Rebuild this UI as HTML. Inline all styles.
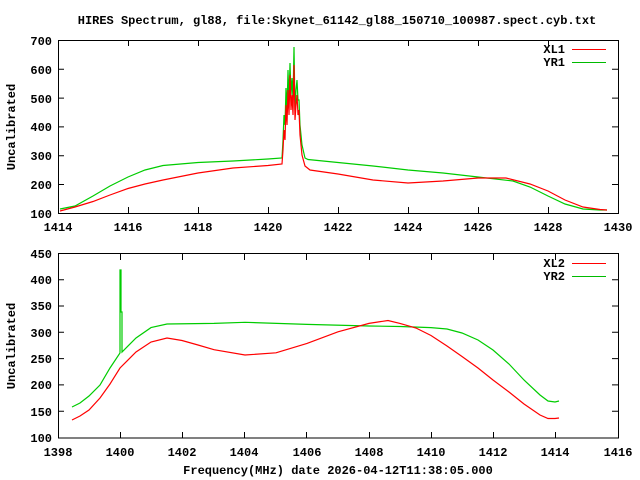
<!DOCTYPE html>
<html><head><style>
body{margin:0;background:#fff;}
svg{display:block;}
text{font-family:"Liberation Mono","DejaVu Sans Mono",monospace;font-weight:bold;font-size:12px;fill:#000;}
</style></head><body>
<svg width="640" height="480" xmlns="http://www.w3.org/2000/svg">
<text x="337" y="24" text-anchor="middle">HIRES Spectrum, gl88, file:Skynet_61142_gl88_150710_100987.spect.cyb.txt</text>
<!-- top plot -->
<rect x="58.5" y="40.5" width="560" height="173" fill="none" stroke="#000" stroke-width="1"/>
<g stroke="#000" stroke-width="1">
<path d="M58 69.3h6M58 98.1h6M58 126.9h6M58 155.7h6M58 184.5h6M618 69.3h-6M618 98.1h-6M618 126.9h-6M618 155.7h-6M618 184.5h-6"/>
<path d="M128.5 213v-6M198.5 213v-6M268.5 213v-6M338.5 213v-6M408.5 213v-6M478.5 213v-6M548.5 213v-6M128.5 40v6M198.5 40v6M268.5 40v6M338.5 40v6M408.5 40v6M478.5 40v6M548.5 40v6"/>
</g>
<g text-anchor="end">
<text x="52" y="45">700</text><text x="52" y="74">600</text><text x="52" y="103">500</text><text x="52" y="131">400</text><text x="52" y="160">300</text><text x="52" y="189">200</text><text x="52" y="218">100</text>
</g>
<g text-anchor="middle">
<text x="58" y="231">1414</text><text x="128" y="231">1416</text><text x="198" y="231">1418</text><text x="268" y="231">1420</text><text x="338" y="231">1422</text><text x="408" y="231">1424</text><text x="478" y="231">1426</text><text x="548" y="231">1428</text><text x="618" y="231">1430</text>
</g>
<text transform="translate(15,127) rotate(-90)" text-anchor="middle">Uncalibrated</text>
<text x="565" y="53" text-anchor="end">XL1</text><text x="565" y="66" text-anchor="end">YR1</text>
<path d="M572 49.5h34" stroke="#f00"/><path d="M572 62.5h34" stroke="#0b0"/>
<polyline fill="none" stroke="#0c0" stroke-width="1.2" points="60,209 75,206 93,196 110,186 128,177 145,170 163,165.5 198,162.5 233,161 268,159 282,158 283,140 284,115 285,125 286,88 287,110 288,70 289,100 290,63 291,95 292,78 293,100 294,47 295,110 296,90 297,80 298,100 299,100 300,125 302,145 305,158 308,159.5 338,162.5 373,166 408,170 443,173 478,177 513,181 530,187 548,196 565,204 583,209 600,210 607,210"/>
<polyline fill="none" stroke="#f00" stroke-width="1.2" points="60,211 75,207 93,201.5 110,195 128,188.5 145,184 163,180 198,173 233,168 268,165.5 282,164 283,150 284,130 285,140 286,105 287,125 288,90 289,115 290,75 291,110 292,95 293,115 294,65 295,120 296,105 297,95 298,115 299,110 300,135 302,155 305,166 310,170 338,174 373,180 408,183 443,181 478,178 506,178 530,184 548,191 565,200 583,207 600,209.5 607,210"/>
<!-- bottom plot -->
<rect x="58.5" y="253.5" width="560" height="184.5" fill="none" stroke="#000" stroke-width="1"/>
<g stroke="#000" stroke-width="1">
<path d="M58 279.7h6M58 306h6M58 332.3h6M58 358.6h6M58 384.9h6M58 411.2h6M618 279.7h-6M618 306h-6M618 332.3h-6M618 358.6h-6M618 384.9h-6M618 411.2h-6"/>
<path d="M120.5 438v-6M182.5 438v-6M244.5 438v-6M306.5 438v-6M369.5 438v-6M431.5 438v-6M493.5 438v-6M555.5 438v-6M120.5 254v6M182.5 254v6M244.5 254v6M306.5 254v6M369.5 254v6M431.5 254v6M493.5 254v6M555.5 254v6"/>
</g>
<g text-anchor="end">
<text x="52" y="258">450</text><text x="52" y="284">400</text><text x="52" y="310">350</text><text x="52" y="337">300</text><text x="52" y="363">250</text><text x="52" y="389">200</text><text x="52" y="416">150</text><text x="52" y="442">100</text>
</g>
<g text-anchor="middle">
<text x="58" y="456">1398</text><text x="120" y="456">1400</text><text x="182" y="456">1402</text><text x="244" y="456">1404</text><text x="307" y="456">1406</text><text x="369" y="456">1408</text><text x="431" y="456">1410</text><text x="493" y="456">1412</text><text x="555" y="456">1414</text><text x="618" y="456">1416</text>
</g>
<text transform="translate(15,346) rotate(-90)" text-anchor="middle">Uncalibrated</text>
<text x="338" y="474" text-anchor="middle">Frequency(MHz) date 2026-04-12T11:38:05.000</text>
<text x="565" y="267" text-anchor="end">XL2</text><text x="565" y="280" text-anchor="end">YR2</text>
<path d="M572 263.5h34" stroke="#f00"/><path d="M572 276.5h34" stroke="#0b0"/>
<polyline fill="none" stroke="#0c0" stroke-width="1.2" points="72,407 80,403 89,396 100,385 110,368 120,353 120,270 121,270 121,312 122,312 122,352 136,338 151,327.6 167,324 214,323.4 245,322.3 307,324.4 369,326 400,326.5 431,327.6 447,329 462,333 478,340 493,350 509,364 524,380 540,395 548,401 555,402 559,401"/>
<polyline fill="none" stroke="#f00" stroke-width="1.2" points="72,420 80,416 89,410 100,398 110,384 120,368 136,352 151,342 167,338 182,340.5 198,345 214,349.7 245,355 276,352.8 307,343.4 338,331.8 369,323.4 388,320.5 400,323.4 416,328 431,335.5 447,346 462,356.5 478,368 493,380 509,392 524,404 540,415 548,418.5 555,418.5 559,418"/>
</svg>
</body></html>
